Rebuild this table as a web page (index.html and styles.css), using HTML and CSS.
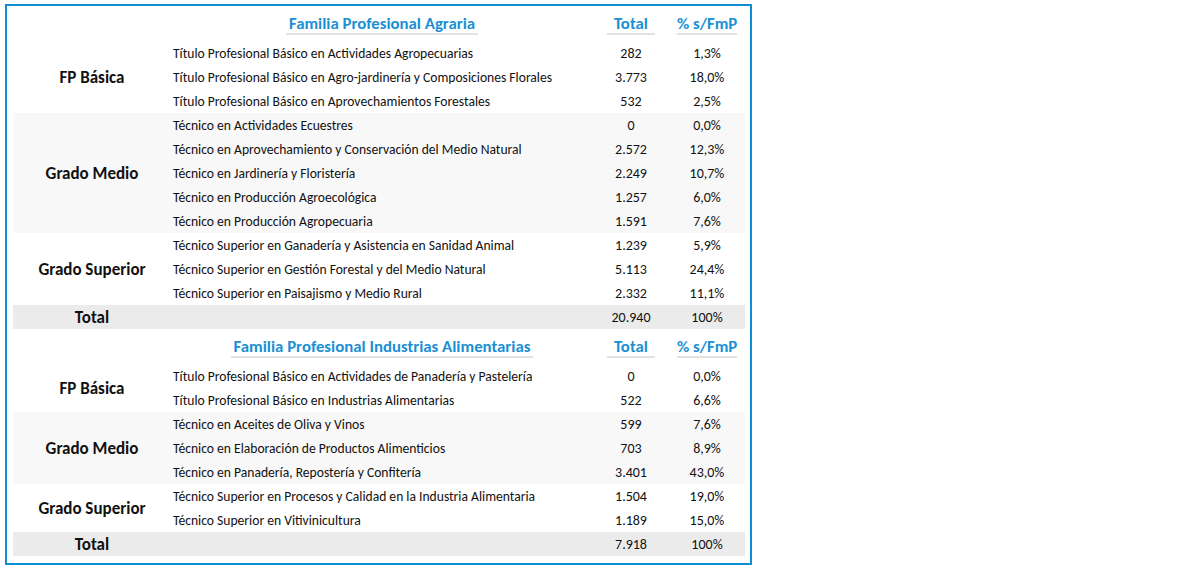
FILE: index.html
```html
<!DOCTYPE html>
<html lang="es">
<head>
<meta charset="utf-8">
<title>Familias Profesionales</title>
<link rel="stylesheet" href="styles.css">
</head>
<body>
<div class="box">
  <table class="tbl">
    <colgroup>
      <col class="c-label"><col class="c-name"><col class="c-total"><col class="c-pct">
    </colgroup>
    <tbody>
      <tr class="head">
        <th></th>
        <th><span class="uline title">Familia Profesional Agraria</span></th>
        <th><span class="uline w-total">Total</span></th>
        <th><span class="uline w-pct">% s/FmP</span></th>
      </tr>
      <tr><td class="grp" rowspan="3">FP Básica</td><td class="name">Título Profesional Básico en Actividades Agropecuarias</td><td class="num">282</td><td class="num">1,3%</td></tr>
      <tr><td class="name">Título Profesional Básico en Agro-jardinería y Composiciones Florales</td><td class="num">3.773</td><td class="num">18,0%</td></tr>
      <tr><td class="name">Título Profesional Básico en Aprovechamientos Forestales</td><td class="num">532</td><td class="num">2,5%</td></tr>
      <tr class="band"><td class="grp" rowspan="5">Grado Medio</td><td class="name">Técnico en Actividades Ecuestres</td><td class="num">0</td><td class="num">0,0%</td></tr>
      <tr class="band"><td class="name">Técnico en Aprovechamiento y Conservación del Medio Natural</td><td class="num">2.572</td><td class="num">12,3%</td></tr>
      <tr class="band"><td class="name">Técnico en Jardinería y Floristería</td><td class="num">2.249</td><td class="num">10,7%</td></tr>
      <tr class="band"><td class="name">Técnico en Producción Agroecológica</td><td class="num">1.257</td><td class="num">6,0%</td></tr>
      <tr class="band"><td class="name">Técnico en Producción Agropecuaria</td><td class="num">1.591</td><td class="num">7,6%</td></tr>
      <tr><td class="grp" rowspan="3">Grado Superior</td><td class="name">Técnico Superior en Ganadería y Asistencia en Sanidad Animal</td><td class="num">1.239</td><td class="num">5,9%</td></tr>
      <tr><td class="name">Técnico Superior en Gestión Forestal y del Medio Natural</td><td class="num">5.113</td><td class="num">24,4%</td></tr>
      <tr><td class="name">Técnico Superior en Paisajismo y Medio Rural</td><td class="num">2.332</td><td class="num">11,1%</td></tr>
      <tr class="total"><td class="grp">Total</td><td></td><td class="num">20.940</td><td class="num">100%</td></tr>

      <tr class="head">
        <th></th>
        <th><span class="uline title">Familia Profesional Industrias Alimentarias</span></th>
        <th><span class="uline w-total">Total</span></th>
        <th><span class="uline w-pct">% s/FmP</span></th>
      </tr>
      <tr><td class="grp" rowspan="2">FP Básica</td><td class="name">Título Profesional Básico en Actividades de Panadería y Pastelería</td><td class="num">0</td><td class="num">0,0%</td></tr>
      <tr><td class="name">Título Profesional Básico en Industrias Alimentarias</td><td class="num">522</td><td class="num">6,6%</td></tr>
      <tr class="band"><td class="grp" rowspan="3">Grado Medio</td><td class="name">Técnico en Aceites de Oliva y Vinos</td><td class="num">599</td><td class="num">7,6%</td></tr>
      <tr class="band"><td class="name">Técnico en Elaboración de Productos Alimenticios</td><td class="num">703</td><td class="num">8,9%</td></tr>
      <tr class="band"><td class="name">Técnico en Panadería, Repostería y Confitería</td><td class="num">3.401</td><td class="num">43,0%</td></tr>
      <tr><td class="grp" rowspan="2">Grado Superior</td><td class="name">Técnico Superior en Procesos y Calidad en la Industria Alimentaria</td><td class="num">1.504</td><td class="num">19,0%</td></tr>
      <tr><td class="name">Técnico Superior en Vitivinicultura</td><td class="num">1.189</td><td class="num">15,0%</td></tr>
      <tr class="total"><td class="grp">Total</td><td></td><td class="num">7.918</td><td class="num">100%</td></tr>
    </tbody>
  </table>
</div>
</body>
</html>
```

FILE: styles.css
```css
html, body {
  margin: 0;
  padding: 0;
  background: #ffffff;
}

body {
  font-family: "Carlito", "Lato", "Liberation Sans", sans-serif;
  color: #111111;
}

.box {
  width: 732px;
  margin: 4px 0 0 5px;
  border: 2px solid #0c8fd2;
  padding: 0 5px 7px 6px;
}

.tbl {
  width: 732px;
  table-layout: fixed;
  border-collapse: collapse;
  border-spacing: 0;
}

.c-label { width: 158px; }
.c-name { width: 422px; }
.c-total { width: 76px; }
.c-pct { width: 76px; }

.tbl td, .tbl th {
  padding: 2px 0 0 0;
  height: 22px;
  font-size: 13.6px;
  line-height: 22px;
  white-space: nowrap;
}

.tbl .head th {
  height: 35px;
  vertical-align: bottom;
  padding: 0 0 5px 0;
  box-sizing: border-box;
  text-align: center;
}

.uline {
  display: inline-block;
  line-height: 18px;
  border-bottom: 2px solid #e2e2e2;
  font-weight: bold;
  font-size: 16.8px;
  color: #1b8fd3;
}

.title { padding: 0 3px; }
.w-total { width: 48px; }
.w-pct { width: 60px; }

.tbl .grp {
  text-align: center;
  vertical-align: middle;
  font-weight: bold;
  font-size: 17px;
}

.tbl .name {
  padding-left: 2px;
  text-align: left;
}

.tbl .num {
  text-align: center;
  font-size: 14px;
}

.band td { background: #f8f8f8; }
.total td { background: #ebebeb; }
```
